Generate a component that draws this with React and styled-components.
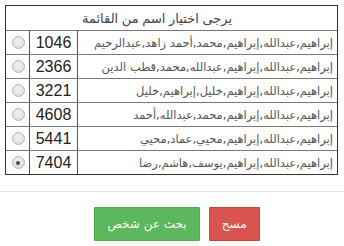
import styled, { createGlobalStyle } from 'styled-components';

const GlobalStyle = createGlobalStyle`
    html, body {
        margin: 0;
        padding: 0;
        background: #fff;
    }
    body {
        font-family: "Liberation Sans", Arial, "DejaVu Sans", sans-serif;
        color: #333;
    }
`;

const people = [
    { id: 1046, name: 'إبراهيم,عبدالله,إبراهيم,محمد,أحمد زاهد,عبدالرحيم' },
    { id: 2366, name: 'إبراهيم,عبدالله,إبراهيم,عبدالله,محمد,قطب الدين' },
    { id: 3221, name: 'إبراهيم,عبدالله,إبراهيم,خليل,إبراهيم,خليل' },
    { id: 4608, name: 'إبراهيم,عبدالله,إبراهيم,محمد,عبدالله,أحمد' },
    { id: 5441, name: 'إبراهيم,عبدالله,إبراهيم,محيي,عماد,محيي' },
    { id: 7404, name: 'إبراهيم,عبدالله,إبراهيم,يوسف,هاشم,رضا', checked: true },
];

const StyledPage = styled.div`
    padding-top: 5px;
`;

const StyledTable = styled.div`
    margin: 0 6px 0 5px;
    border: 1px solid #333;
`;

const StyledHeader = styled.div`
    height: 24px;
    display: flex;
    align-items: center;
    padding-left: 76px;
    font-size: 13px;
    color: #444;
    direction: rtl;
    justify-content: flex-end;
`;

const StyledRow = styled.div`
    display: grid;
    grid-template-columns: 24px 48px 1fr;
    height: 23px;
    border-top: 1px solid #777;
`;

const StyledCell = styled.div`
    display: flex;
    align-items: center;
    min-width: 0;
    border-right: ${({ last }) => (last ? 'none' : '1px solid #555')};
`;

const StyledRadioCell = styled(StyledCell)`
    justify-content: center;
    padding-left: 1px;
`;

const StyledNumber = styled(StyledCell)`
    justify-content: center;
    font-size: 16px;
    color: #222;
    padding-top: 1px;
`;

const StyledName = styled(StyledCell)`
    direction: rtl;
    justify-content: flex-start;
    padding-right: 4px;
    font-family: "DejaVu Sans", sans-serif;
    font-size: 11.5px;
    color: #555;
    white-space: nowrap;
    overflow: hidden;
`;

const StyledRadio = styled.span`
    width: 11px;
    height: 11px;
    border-radius: 50%;
    border: 1px solid #b8b8b8;
    background: radial-gradient(circle at 50% 40%, #f2f2f2 0%, #d6d6d6 100%);
    display: flex;
    align-items: center;
    justify-content: center;

    &::after {
        content: '';
        width: 4px;
        height: 4px;
        border-radius: 50%;
        background: ${({ checked }) => (checked ? '#4a4a4a' : 'transparent')};
    }
`;

const StyledDivider = styled.hr`
    margin: 16px 0 0;
    border: none;
    border-top: 1px solid #e3e3e3;
`;

const StyledActions = styled.div`
    display: flex;
    justify-content: center;
    gap: 9px;
    padding: 15px 0 0 10px;
`;

const StyledButton = styled.button`
    height: 34px;
    padding: 0 12px;
    border: 1px solid ${({ variant }) => (variant === 'danger' ? '#d43f3a' : '#4cae4c')};
    background: ${({ variant }) => (variant === 'danger' ? '#d9534f' : '#5cb85c')};
    color: #fff;
    font-family: "DejaVu Sans", sans-serif;
    font-size: 12px;
    border-radius: 1px;
    direction: rtl;
    cursor: pointer;
`;

const App = () => (
    <StyledPage>
        <GlobalStyle />
        <StyledTable>
            <StyledHeader>يرجى اختيار اسم من القائمة</StyledHeader>
            {people.map(({ id, name, checked }) => (
                <StyledRow key={id}>
                    <StyledRadioCell>
                        <StyledRadio checked={checked} />
                    </StyledRadioCell>
                    <StyledNumber>{id}</StyledNumber>
                    <StyledName last>{name}</StyledName>
                </StyledRow>
            ))}
        </StyledTable>
        <StyledDivider />
        <StyledActions>
            <StyledButton>بحث عن شخص</StyledButton>
            <StyledButton variant="danger">مسح</StyledButton>
        </StyledActions>
    </StyledPage>
);

export default App;
